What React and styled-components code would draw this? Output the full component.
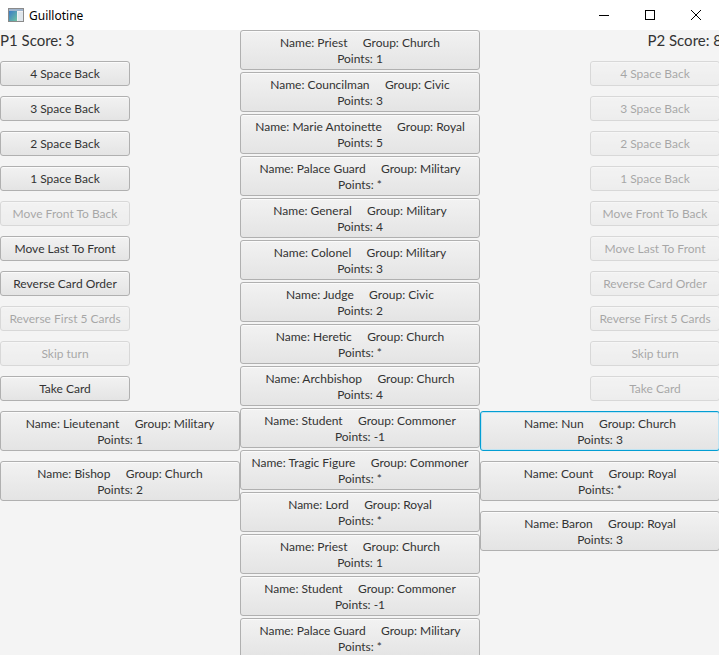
import React from 'react';
import styled, { createGlobalStyle, css } from 'styled-components';

const GlobalStyle = createGlobalStyle`
  html, body {
    margin: 0;
    padding: 0;
    width: 719px;
    height: 655px;
    overflow: hidden;
    background: #f4f4f4;
  }
  * { box-sizing: border-box; }
`;

const leftButtons = [
  { label: '4 Space Back', on: true },
  { label: '3 Space Back', on: true },
  { label: '2 Space Back', on: true },
  { label: '1 Space Back', on: true },
  { label: 'Move Front To Back', on: false },
  { label: 'Move Last To Front', on: true },
  { label: 'Reverse Card Order', on: true },
  { label: 'Reverse First 5 Cards', on: false },
  { label: 'Skip turn', on: false },
  { label: 'Take Card', on: true },
];

const rightButtons = leftButtons.map((b) => ({ label: b.label, on: false }));

const leftCards = [
  { name: 'Lieutenant', group: 'Military', points: '1' },
  { name: 'Bishop', group: 'Church', points: '2' },
];

const lineCards = [
  { name: 'Priest', group: 'Church', points: '1' },
  { name: 'Councilman', group: 'Civic', points: '3' },
  { name: 'Marie Antoinette', group: 'Royal', points: '5' },
  { name: 'Palace Guard', group: 'Military', points: '*' },
  { name: 'General', group: 'Military', points: '4' },
  { name: 'Colonel', group: 'Military', points: '3' },
  { name: 'Judge', group: 'Civic', points: '2' },
  { name: 'Heretic', group: 'Church', points: '*' },
  { name: 'Archbishop', group: 'Church', points: '4' },
  { name: 'Student', group: 'Commoner', points: '-1' },
  { name: 'Tragic Figure', group: 'Commoner', points: '*' },
  { name: 'Lord', group: 'Royal', points: '*' },
  { name: 'Priest', group: 'Church', points: '1' },
  { name: 'Student', group: 'Commoner', points: '-1' },
  { name: 'Palace Guard', group: 'Military', points: '*' },
];

const rightCards = [
  { name: 'Nun', group: 'Church', points: '3', focused: true },
  { name: 'Count', group: 'Royal', points: '*' },
  { name: 'Baron', group: 'Royal', points: '3' },
];

const App = () => {
  return (
    <Window>
      <GlobalStyle />
      <TitleBar>
        <AppIcon viewBox="0 0 16 14" width="16" height="14">
          <defs>
            <linearGradient id="ic" x1="0" y1="0" x2="1" y2="1">
              <stop offset="0" stopColor="#3a7bc8" />
              <stop offset="1" stopColor="#6fc2a0" />
            </linearGradient>
          </defs>
          <rect x="0.5" y="0.5" width="15" height="13" fill="#f2f2f2" stroke="#8a8a8a" />
          <rect x="1" y="1" width="14" height="2" fill="#9fb4cc" />
          <rect x="1" y="3" width="8" height="10" fill="url(#ic)" />
          <rect x="10" y="4" width="5" height="9" fill="#dfe6ec" />
        </AppIcon>
        <Title>Guillotine</Title>
        <Controls>
          <Control>
            <svg width="10" height="10" viewBox="0 0 10 10">
              <path d="M0 5.5 H10" stroke="#000" strokeWidth="1" />
            </svg>
          </Control>
          <Control>
            <svg width="10" height="10" viewBox="0 0 10 10">
              <rect x="0.5" y="0.5" width="9" height="9" fill="none" stroke="#000" strokeWidth="1" />
            </svg>
          </Control>
          <Control>
            <svg width="10" height="10" viewBox="0 0 10 10">
              <path d="M0 0 L10 10 M10 0 L0 10" stroke="#000" strokeWidth="1" />
            </svg>
          </Control>
        </Controls>
      </TitleBar>

      <Board>
        <SideColumn>
          <Score>P1 Score: 3</Score>
          {leftButtons.map((b) => (
            <ActionButton key={b.label} disabled={!b.on}>{b.label}</ActionButton>
          ))}
          {leftCards.map((c, i) => (
            <Card key={i} card={c} />
          ))}
        </SideColumn>

        <LineColumn>
          {lineCards.map((c, i) => (
            <Card key={i} card={c} />
          ))}
        </LineColumn>

        <SideColumn $right>
          <Score $right>P2 Score: 8</Score>
          {rightButtons.map((b) => (
            <ActionButton key={b.label} disabled={!b.on}>{b.label}</ActionButton>
          ))}
          {rightCards.map((c, i) => (
            <Card key={i} card={c} />
          ))}
        </SideColumn>
      </Board>
    </Window>
  );
};

const Card = ({ card }) => (
  <CardButton $focused={card.focused}>
    <CardLine>{`Name: ${card.name}     Group: ${card.group}`}</CardLine>
    <CardLine>{`Points: ${card.points}`}</CardLine>
  </CardButton>
);

export default App;

const Window = styled.div`
  width: 719px;
  height: 655px;
  overflow: hidden;
  display: flex;
  flex-direction: column;
  background: #f4f4f4;
  font-family: "Lato", "Noto Sans", sans-serif;
  color: #333;
`;

const TitleBar = styled.div`
  height: 30px;
  flex: none;
  display: flex;
  align-items: center;
  background: #fff;
  padding-left: 8px;
`;

const AppIcon = styled.svg`
  display: block;
  margin-right: 5px;
`;

const Title = styled.span`
  font-family: "Noto Sans", "Open Sans", sans-serif;
  font-size: 12px;
  color: #000;
`;

const Controls = styled.div`
  margin-left: auto;
  display: flex;
  height: 100%;
`;

const Control = styled.div`
  width: 46px;
  height: 100%;
  display: flex;
  align-items: center;
  justify-content: center;
  svg { display: block; }
`;

const Board = styled.div`
  flex: 1;
  display: grid;
  grid-template-columns: 240px 240px 240px;
  align-items: start;
  overflow: hidden;
`;

const SideColumn = styled.div`
  display: flex;
  flex-direction: column;
  align-items: ${(p) => (p.$right ? 'flex-end' : 'flex-start')};
  gap: 10px;
`;

const LineColumn = styled.div`
  display: flex;
  flex-direction: column;
  gap: 2px;
`;

const Score = styled.div`
  height: 21px;
  line-height: 21px;
  font-size: 15px;
  white-space: nowrap;
  ${(p) => p.$right && css`margin-right: -2px;`}
`;

const fxButton = css`
  border: 1px solid #b0b0b0;
  border-radius: 3px;
  background: linear-gradient(to bottom, #f2f2f2 0%, #e4e4e4 100%);
  box-shadow: inset 0 1px 0 #fbfbfb;
  color: #333;
  font-family: "Lato", "Noto Sans", sans-serif;
  font-size: 12px;
  padding: 0;
  margin: 0;
  text-align: center;
`;

const ActionButton = styled.button`
  ${fxButton}
  width: 130px;
  height: 25px;
  line-height: 23px;
  &:disabled {
    opacity: 0.4;
  }
`;

const CardButton = styled.div`
  ${fxButton}
  width: 240px;
  height: 40px;
  padding-top: 1px;
  display: flex;
  flex-direction: column;
  justify-content: center;
  ${(p) => p.$focused && css`
    border-color: #039ed3;
    box-shadow: inset 0 0 0 1px #bfe4f3;
  `}
`;

const CardLine = styled.div`
  white-space: pre;
  line-height: 16px;
`;
